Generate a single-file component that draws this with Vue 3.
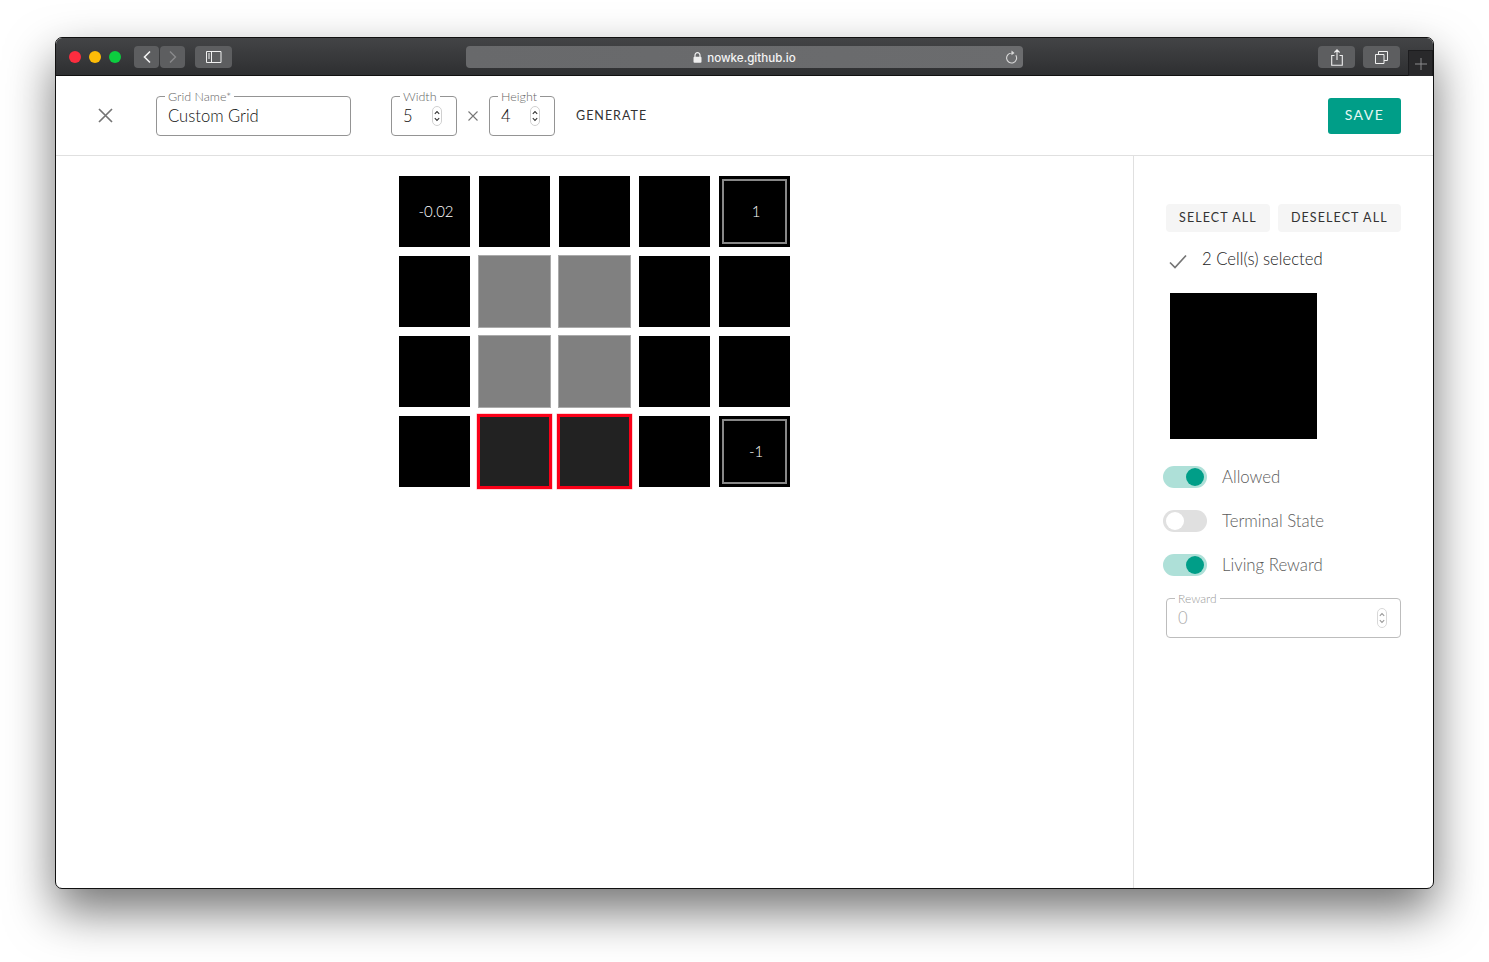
<script setup>
const cells = [
  { t: '-0.02' }, {}, {}, {}, { t: '1', term: 1 },
  {}, { s: 'wall' }, { s: 'wall' }, {}, {},
  {}, { s: 'wall' }, { s: 'wall' }, {}, {},
  {}, { s: 'sel' }, { s: 'sel' }, {}, { t: '-1', term: 1 }
]
const toggles = [
  { label: 'Allowed', on: true },
  { label: 'Terminal State', on: false },
  { label: 'Living Reward', on: true }
]
</script>

<template>
  <div class="page">
    <div class="window">
      <header class="chrome">
        <div class="lights">
          <i class="light red"></i><i class="light yellow"></i><i class="light green"></i>
        </div>
        <div class="navs">
          <div class="cbtn nav">
            <svg width="10" height="14" viewBox="0 0 10 14"><path d="M8 1.500 2.500 7 8 12.500" fill="none" stroke="#f2f2f2" stroke-width="1.600"/></svg>
          </div>
          <div class="cbtn nav">
            <svg width="10" height="14" viewBox="0 0 10 14"><path d="M2 1.500 7.500 7 2 12.500" fill="none" stroke="#8a8a8c" stroke-width="1.400"/></svg>
          </div>
        </div>
        <div class="cbtn side">
          <svg width="16" height="12" viewBox="0 0 16 12"><path d="M.5.500h14.500v11H.5zM5.500.500v11" fill="none" stroke="#f0f0f0"/><path d="M2 3h2M2 5h2M2 7h2" stroke="#f0f0f0"/></svg>
        </div>
        <div class="url">
          <span class="addr">
            <svg width="9" height="11" viewBox="0 0 9 11"><path d="M2 5V3.200a2.500 2.500 0 0 1 5 0V5" fill="none" stroke="#eee" stroke-width="1.200"/><rect x=".5" y="4.800" width="8" height="6" rx="1" fill="#eee"/></svg>
            nowke.github.io
          </span>
          <svg class="reload" width="13" height="14" viewBox="0 0 13 14"><path d="M10.800 5.300A5 5 0 1 1 7 3H6.500" fill="none" stroke="#d8d8d8" stroke-width="1.100"/><path d="M6.500 .6 9.500 3 6.500 5.200z" fill="#d8d8d8"/></svg>
        </div>
        <div class="cbtn action">
          <svg width="12" height="17" viewBox="0 0 12 17"><path d="M3.500 6.500H.7v9.800h10.600V6.500H8.500M6 11V1.200M3.400 3.500 6 .9l2.600 2.600" fill="none" stroke="#f0f0f0" stroke-width="1.100"/></svg>
        </div>
        <div class="cbtn action second">
          <svg width="13" height="13" viewBox="0 0 13 13"><path d="M.5 3.500h8.500v9H.5zM3.500 3.500V.5h9v9H9" fill="none" stroke="#f0f0f0"/></svg>
        </div>
        <div class="plus">
          <svg width="12" height="12" viewBox="0 0 12 12"><path d="M6 0v12M0 6h12" stroke="#8c8c8e"/></svg>
        </div>
      </header>

      <section class="toolbar">
        <svg class="close" width="15" height="15" viewBox="0 0 15 15"><path d="M1 1l13 13M14 1 1 14" stroke="#757575" stroke-width="1.700"/></svg>
        <div class="field name">
          <span class="legend">Grid Name*</span>
          <span class="value">Custom Grid</span>
        </div>
        <div class="field small width">
          <span class="legend">Width</span>
          <span class="value">5</span>
          <svg class="spin" width="10" height="20" viewBox="0 0 10 20"><rect x=".5" y=".5" width="9" height="19" rx="4.500" fill="none" stroke="#d0d0d0"/><path d="M2.800 7.800 5 5.600l2.200 2.200M2.800 12.200 5 14.400l2.200-2.200" fill="none" stroke="#333" stroke-width="1.100"/></svg>
        </div>
        <svg class="times" width="10" height="10" viewBox="0 0 10 10"><path d="M.5.500l9 9M9.500.500l-9 9" stroke="#777" stroke-width="1.100"/></svg>
        <div class="field small">
          <span class="legend">Height</span>
          <span class="value">4</span>
          <svg class="spin" width="10" height="20" viewBox="0 0 10 20"><rect x=".5" y=".5" width="9" height="19" rx="4.500" fill="none" stroke="#d0d0d0"/><path d="M2.800 7.800 5 5.600l2.200 2.200M2.800 12.200 5 14.400l2.200-2.200" fill="none" stroke="#333" stroke-width="1.100"/></svg>
        </div>
        <span class="generate">GENERATE</span>
        <button class="save">SAVE</button>
      </section>

      <main class="body">
        <div class="canvas">
          <div class="grid">
            <div v-for="(c, i) in cells" :key="i" class="cell" :class="c.s">
              <div v-if="c.t" class="inner" :class="{ term: c.term }">{{ c.t }}</div>
            </div>
          </div>
        </div>
        <aside class="panel">
          <div class="actions">
            <span class="pbtn">SELECT ALL</span>
            <span class="pbtn">DESELECT ALL</span>
          </div>
          <div class="count">
            <svg width="18" height="15" viewBox="0 0 18 15"><path d="M1 8.500l5 5L17 1.500" fill="none" stroke="#757575" stroke-width="1.700"/></svg>
            <span>2 Cell(s) selected</span>
          </div>
          <div class="preview"></div>
          <div class="toggles">
            <div v-for="t in toggles" :key="t.label" class="toggle">
              <div class="track" :class="{ on: t.on }"><i class="thumb"></i></div>
              <span class="tlabel">{{ t.label }}</span>
            </div>
          </div>
          <div class="field reward">
            <span class="legend">Reward</span>
            <span class="value">0</span>
            <svg class="spin" width="10" height="20" viewBox="0 0 10 20"><rect x=".5" y=".5" width="9" height="19" rx="4.500" fill="none" stroke="#d8d8d8"/><path d="M2.800 7.800 5 5.600l2.200 2.200M2.800 12.200 5 14.400l2.200-2.200" fill="none" stroke="#999" stroke-width="1.100"/></svg>
          </div>
        </aside>
      </main>
    </div>
  </div>
</template>

<style>
html, body { margin: 0; background: #fff; overflow: hidden; }
</style>

<style scoped>
.page {
  width: 1489px;
  height: 962px;
  padding: 37px 0 0 55px;
  box-sizing: border-box;
  font-family: Lato, "Open Sans", sans-serif;
  font-weight: 300;
  background: #fff;
}
.window {
  width: 1379px;
  height: 852px;
  box-sizing: border-box;
  border: 1px solid #111;
  border-radius: 7px;
  background: #fff;
  overflow: hidden;
  display: flex;
  flex-direction: column;
  box-shadow: 0 22px 48px rgba(0,0,0,.55);
}

.chrome {
  height: 38px;
  flex: none;
  display: flex;
  align-items: flex-start;
  padding-top: 8px;
  box-sizing: border-box;
  background: linear-gradient(#434446, #2e2f31);
  border-bottom: 1px solid #111;
}
.lights { display: flex; gap: 8px; margin: 5px 0 0 13px; }
.light { width: 12px; height: 12px; border-radius: 50%; display: block; }
.red { background: #fc2d3f; }
.yellow { background: #fdbc07; }
.green { background: #0ccd3f; }
.navs { display: flex; gap: 1px; margin-left: 13px; }
.cbtn {
  height: 22px;
  border-radius: 4px;
  background: #5d5e60;
  display: flex;
  align-items: center;
  justify-content: center;
}
.nav { width: 25px; }
.side { width: 37px; margin-left: 10px; }
.url {
  width: 557px;
  height: 22px;
  margin-left: 234px;
  border-radius: 4px;
  background: linear-gradient(90deg, #68696b, #6b6c6e);
  display: flex;
  align-items: center;
  justify-content: center;
  position: relative;
}
.addr {
  font: 500 11.600px/14px Inter, "Liberation Sans", sans-serif;
  color: #f4f4f4;
  margin: 1px 0 0 0;
  display: flex;
  align-items: center;
  gap: 5px;
}
.reload { position: absolute; right: 5px; top: 4px; }
.action { width: 37px; margin-left: 295px; }
.action.second { margin-left: 8px; }
.plus {
  width: 25px;
  height: 26px;
  margin: 4px 0 0 8px;
  box-sizing: border-box;
  border: 1px solid #1c1c1e;
  border-bottom: 0;
  background: #29292b;
  display: flex;
  align-items: center;
  justify-content: center;
}

.toolbar {
  height: 80px;
  flex: none;
  box-sizing: border-box;
  border-bottom: 1px solid #e0e0e0;
  display: flex;
  align-items: center;
  padding: 0 32px 0 42px;
}
.close { flex: none; }
.field {
  position: relative;
  height: 40px;
  box-sizing: border-box;
  border: 1px solid #949494;
  border-radius: 4px;
  display: flex;
  align-items: center;
  padding: 0 11px;
  color: #111;
}
.legend {
  position: absolute;
  left: 8px;
  top: -7px;
  padding: 0 3px;
  background: #fff;
  font-size: 12.500px;
  line-height: 13px;
  color: #666;
}
.value { font-size: 16.600px; line-height: 38px; }
.name { width: 195px; margin-left: 43px; }
.small { width: 66px; }
.width { margin-left: 40px; }
.spin { position: absolute; right: 14px; top: 9px; }
.times { margin: 0 11px; flex: none; }
.generate {
  margin-left: 21px;
  font-size: 12.500px;
  font-weight: 400;
  letter-spacing: 1px;
  color: #333;
}
.save {
  margin-left: auto;
  width: 73px;
  height: 36px;
  border: 0;
  border-radius: 3px;
  background: #009e88;
  color: #e8f7f4;
  font: 400 14px Lato, sans-serif;
  letter-spacing: 1.500px;
  padding: 0 0 2px;
}

.body { flex: 1; display: flex; min-height: 0; }
.canvas { flex: 1; padding: 20px 0 0 343px; }
.grid {
  display: grid;
  grid-template-columns: repeat(5, 71px);
  grid-auto-rows: 71px;
  gap: 9px;
}
.cell {
  background: #000;
  display: flex;
  box-sizing: border-box;
}
.wall { background: #808080; outline: 1px solid #ababab; }
.sel { background: #222; outline: 3px solid #fa0018; outline-offset: -1px; box-shadow: 0 0 0 2.500px rgba(250,0,24,.35); }
.inner {
  flex: 1;
  display: flex;
  align-items: center;
  justify-content: center;
  color: #fff;
  font-size: 15px;
  padding: 0 0 2px 3px;
}
.inner.term {
  margin: 3px;
  border: 2px solid #888;
  padding: 0 0 1px 3px;
  font-size: 15px;
}

.panel {
  width: 300px;
  flex: none;
  box-sizing: border-box;
  border-left: 1px solid #e0e0e0;
  padding: 48px 0 0 32px;
}
.actions { display: flex; gap: 8px; }
.pbtn {
  height: 28px;
  padding: 0 13px;
  border-radius: 4px;
  background: #f5f5f5;
  color: #333;
  font-size: 12.500px;
  font-weight: 400;
  letter-spacing: 1.100px;
  line-height: 28px;
}
.count {
  display: flex;
  align-items: center;
  gap: 15px;
  margin: 16px 0 0 3px;
  height: 24px;
  font-size: 16.700px;
  color: #222;
}
.count span { position: relative; top: -1px; }
.count svg { margin-top: 2px; }
.preview { width: 147px; height: 146px; background: #000; margin: 21px 0 0 4px; }
.toggles { margin: 27px 0 0 -3px; display: flex; flex-direction: column; gap: 22px; }
.toggle {
  display: flex;
  align-items: center;
  gap: 15px;
  height: 22px;
  font-size: 16.800px;
  color: #5c5c5c;
}
.tlabel { margin-top: -2px; }
.track {
  width: 44px;
  height: 22px;
  border-radius: 11px;
  background: #e0e0e0;
  display: flex;
  align-items: center;
  padding: 0 3px;
  box-sizing: border-box;
}
.track.on { background: #aee0d8; justify-content: flex-end; }
.thumb { width: 18px; height: 18px; border-radius: 50%; background: #fff; display: block; }
.track.on .thumb { background: #009e88; }
.reward {
  width: 235px;
  margin-top: 22px;
  border-color: #bdbdbd;
  color: #aaa;
}
.reward .spin { right: 13px; }
.reward .legend { color: #999; font-size: 12px; }
</style>
